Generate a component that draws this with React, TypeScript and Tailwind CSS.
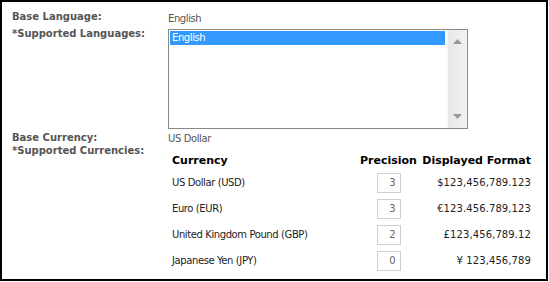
const currencies = [
  { name: "US Dollar (USD)", precision: 3, format: "$123,456,789.123" },
  { name: "Euro (EUR)", precision: 3, format: "€123.456.789,123" },
  { name: "United Kingdom Pound (GBP)", precision: 2, format: "£123,456,789.12" },
  { name: "Japanese Yen (JPY)", precision: 0, format: "¥ 123,456,789" },
];

export default function App() {
  return (
    <div className="w-[548px] h-[281px] border-2 border-black bg-white font-['DejaVu_Sans',sans-serif] text-[10px] leading-[12px]">
      <div className="pl-[10px] pt-[9px]">
        {/* Base language */}
        <div className="flex items-start">
          <div className="w-[156px] font-bold text-[#555]">Base Language:</div>
          <div className="pt-[2px] text-[#555] tracking-[-0.4px]">English</div>
        </div>

        {/* Supported languages listbox */}
        <div className="flex items-start mt-[3px]">
          <div className="w-[156px] font-bold text-[#555]">*Supported Languages:</div>
          <div className="mt-[1px] w-[300px] h-[100px] border border-[#8a8a8a] flex">
            <div className="flex-1 p-[1px]">
              <div className="h-[14px] bg-[#3399ff] text-white pl-[2px] flex items-center tracking-[-0.4px]">
                English
              </div>
            </div>
            <div className="w-[20px] ml-[1px] bg-gradient-to-r from-[#e8e8e8] to-[#f2f2f2] border-l border-[#f8f8f8] flex flex-col items-center justify-between pt-[9px] pb-[9px]">
              <svg width="9" height="5" viewBox="0 0 9 5">
                <path d="M4.5 0 L9 5 L0 5 Z" fill="#999" />
              </svg>
              <svg width="9" height="5" viewBox="0 0 9 5">
                <path d="M0 0 L9 0 L4.5 5 Z" fill="#999" />
              </svg>
            </div>
          </div>
        </div>

        {/* Base currency */}
        <div className="flex items-start mt-[3px]">
          <div className="w-[156px] font-bold text-[#555]">Base Currency:</div>
          <div className="pt-[1px] text-[#555] tracking-[-0.4px]">US Dollar</div>
        </div>

        {/* Supported currencies */}
        <div className="flex items-start">
          <div className="w-[156px] font-bold text-[#555]">*Supported Currencies:</div>
          <div className="mt-[9px] pl-[4px]">
            <div className="grid grid-cols-[188px_61px_110px] text-[11px] leading-[14px] font-bold text-black">
              <div>Currency</div>
              <div className="whitespace-nowrap">Precision</div>
              <div className="text-right whitespace-nowrap">Displayed Format</div>
            </div>
            <div className="mt-[5px] flex flex-col gap-[6px]">
              {currencies.map((c) => (
                <div
                  key={c.name}
                  className="grid grid-cols-[188px_61px_110px] h-[20px] items-center text-[#222]"
                >
                  <div className="tracking-[-0.4px] whitespace-nowrap">{c.name}</div>
                  <div className="flex justify-center pr-[4px]">
                    <div className="w-[24px] h-[20px] border border-[#cfcfcf] text-[#666] pr-[4px] flex items-center justify-end">
                      {c.precision}
                    </div>
                  </div>
                  <div className="text-right whitespace-nowrap tracking-[0.1px]">{c.format}</div>
                </div>
              ))}
            </div>
          </div>
        </div>
      </div>
    </div>
  );
}
